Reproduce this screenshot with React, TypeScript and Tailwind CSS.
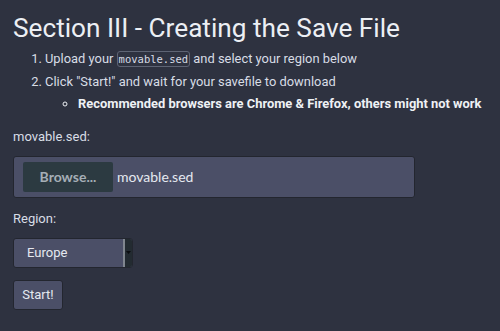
import { useState } from 'react';

const App = () => {
  const [region] = useState('Europe');

  return (
    <div className="min-h-screen w-full bg-[#2e3240] text-[#d8dde6] font-['Roboto',sans-serif] px-[13px] pt-[13px]">
      <h2 className="text-[26.2px] leading-[30px] text-[#eceff4] font-normal whitespace-nowrap">
        Section III - Creating the Save File
      </h2>

      <ol className="list-decimal pl-[32px] mt-[5px] text-[12.9px] leading-[22.5px]">
        <li>
          Upload your{' '}
          <code className="font-['DejaVu_Sans_Mono',monospace] text-[10.5px] px-[1px] py-[1px] border border-[#5e6474] rounded-[3px]">
            movable.sed
          </code>{' '}
          and select your region below
        </li>
        <li>
          Click "Start!" and wait for your savefile to download
          <ul className="list-[circle] pl-[33px]">
            <li className="font-bold text-[#eef1f5] whitespace-nowrap">
              Recommended browsers are Chrome &amp; Firefox, others might not work
            </li>
          </ul>
        </li>
      </ol>

      <label className="block mt-[13px] text-[13px] leading-[16px]">movable.sed:</label>
      <div className="mt-[11px] w-[402px] h-[42px] flex items-center gap-[4px] px-[9px] bg-[#4b4f67] border border-[#23262f] rounded-[3px]">
        <button className="w-[90px] h-[30px] bg-[#2c3a41] text-[#a5aeb6] font-bold text-[14px] rounded-[2px] font-['Lato',sans-serif]">
          Browse...
        </button>
        <span className="text-[14px] text-[#e5e9f0] font-['Lato',sans-serif]">movable.sed</span>
      </div>

      <label className="block mt-[13px] text-[13px] leading-[16px]">Region:</label>
      <div className="mt-[11px] w-[120px] h-[30px] flex bg-[#4b4f67] border border-[#23262f] rounded-[3px] overflow-hidden">
        <div className="flex-1 flex items-center pl-[13px] text-[13px] text-[#e5e9f0]">{region}</div>
        <div className="w-[9px] flex items-center justify-center bg-[#232b31] border-l-2 border-[#80868f]">
          <svg width="5" height="4" viewBox="0 0 5 4">
            <path d="M0 0 L5 0 L2.5 3 Z" fill="#0b0d10" />
          </svg>
        </div>
      </div>

      <button className="block mt-[12px] w-[50px] h-[30px] bg-[#4b4f67] border border-[#23262f] rounded-[3px] text-[13px] text-[#e5e9f0]">
        Start!
      </button>
    </div>
  );
};

export default App;
